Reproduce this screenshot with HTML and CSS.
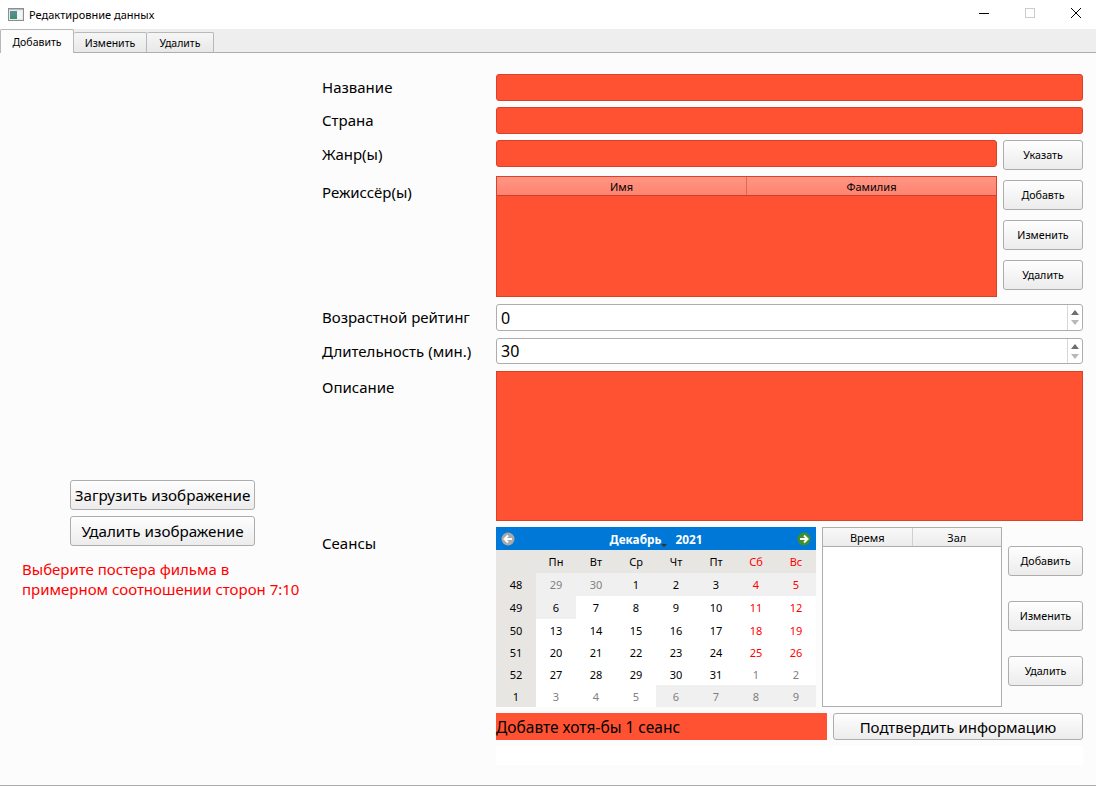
FILE: index.html
```html
<!DOCTYPE html>
<html>
	<head>
		<title>Редактировние данных</title>
		<meta charset="UTF-8">
		<link rel="stylesheet" href="styles.css">
	</head>
	<body>
		<div id="window">
			<div class="titlebar">
				<svg class="app-icon" width="16" height="13" viewBox="0 0 16 13">
					<defs>
						<linearGradient id="appfill" x1="0" y1="0" x2="0" y2="1">
							<stop offset="0" stop-color="#5d8f9a"/>
							<stop offset="1" stop-color="#3e8f6a"/>
						</linearGradient>
					</defs>
					<rect x="0.5" y="0.5" width="15" height="12" fill="#e8e8e8" stroke="#8a8f94"/>
					<rect x="2" y="3" width="7" height="8" fill="url(#appfill)"/>
					<rect x="9" y="3" width="5" height="8" fill="#f4f6f6"/>
					<rect x="1" y="1" width="14" height="1" fill="#b9bec2"/>
				</svg>
				<span class="title">Редактировние данных</span>
				<div class="win-buttons">
					<svg width="46" height="29" viewBox="0 0 46 29"><path d="M18 13.5h10" stroke="#000" fill="none"/></svg>
					<svg width="46" height="29" viewBox="0 0 46 29"><rect x="18.5" y="8.5" width="9" height="9" stroke="#ccc" fill="none"/></svg>
					<svg width="46" height="29" viewBox="0 0 46 29"><path d="M18 8l10 10M28 8L18 18" stroke="#000" fill="none"/></svg>
				</div>
			</div>
			<div class="tabs">
				<div class="tab active">Добавить</div>
				<div class="tab t2">Изменить</div>
				<div class="tab t3">Удалить</div>
			</div>
			<div id="pane">
				<div class="poster">
					<button class="btn big wide">Загрузить изображение</button>
					<button class="btn big wide">Удалить изображение</button>
					<p class="hint">Выберите постера фильма в<br>примерном соотношении сторон 7:10</p>
				</div>
				<div id="form">
					<div class="row r-name">
						<label>Название</label>
						<div class="field bad"></div>
					</div>
					<div class="row r-country">
						<label>Страна</label>
						<div class="field bad"></div>
					</div>
					<div class="row r-genre">
						<label>Жанр(ы)</label>
						<div class="field bad"></div>
						<button class="btn side">Указать</button>
					</div>
					<div class="row r-dir">
						<label>Режиссёр(ы)</label>
						<div class="table bad-table">
							<div class="thead"><span>Имя</span><span>Фамилия</span></div>
						</div>
						<div class="side-col">
							<button class="btn side">Добавть</button>
							<button class="btn side">Изменить</button>
							<button class="btn side">Удалить</button>
						</div>
					</div>
					<div class="row r-age">
						<label>Возрастной рейтинг</label>
						<div class="spin"><span class="val">0</span><div class="arrows"><i class="up"></i><i class="down"></i></div></div>
					</div>
					<div class="row r-len">
						<label>Длительность (мин.)</label>
						<div class="spin"><span class="val">30</span><div class="arrows"><i class="up"></i><i class="down"></i></div></div>
					</div>
					<div class="row r-desc">
						<label>Описание</label>
						<div class="desc"></div>
					</div>
					<div class="row r-sess">
						<label>Сеансы</label>
						<div class="calendar">
							<div class="cal-head">
								<svg width="14" height="14" viewBox="0 0 14 14"><circle cx="7" cy="7" r="6.5" fill="#a9a9a9"/><path d="M11 7H4M7 3.5L3.5 7 7 10.500" stroke="#fff" stroke-width="2" fill="none"/></svg>
								<span class="month">Декабрь<i class="drop"></i></span>
								<span class="year">2021</span>
								<svg width="14" height="14" viewBox="0 0 14 14"><circle cx="7" cy="7" r="6.500" fill="#3f8f2c"/><path d="M3 7h7M7 3.500L10.500 7 7 10.500" stroke="#fff" stroke-width="2" fill="none"/></svg>
							</div>
							<div class="cal-grid">
								<b class="wk"></b><b class="wk">Пн</b><b class="wk">Вт</b><b class="wk">Ср</b><b class="wk">Чт</b><b class="wk">Пт</b><b class="wk red">Сб</b><b class="wk red">Вс</b>
								<b class="wk">48</b><b class="gr out">29</b><b class="gr out">30</b><b class="gr">1</b><b class="gr">2</b><b class="gr">3</b><b class="gr red">4</b><b class="gr red">5</b>
								<b class="wk">49</b><b class="gr">6</b><b>7</b><b>8</b><b>9</b><b>10</b><b class="red">11</b><b class="red">12</b>
								<b class="wk">50</b><b>13</b><b>14</b><b>15</b><b>16</b><b>17</b><b class="red">18</b><b class="red">19</b>
								<b class="wk">51</b><b>20</b><b>21</b><b>22</b><b>23</b><b>24</b><b class="red">25</b><b class="red">26</b>
								<b class="wk">52</b><b>27</b><b>28</b><b>29</b><b>30</b><b>31</b><b class="out">1</b><b class="out">2</b>
								<b class="wk">1</b><b class="out">3</b><b class="out">4</b><b class="out">5</b><b class="gr out">6</b><b class="gr out">7</b><b class="gr out">8</b><b class="gr out">9</b>
							</div>
						</div>
						<div class="table sess-table">
							<div class="thead"><span>Время</span><span>Зал</span></div>
						</div>
						<div class="side-col sess-btns">
							<button class="btn side">Добавить</button>
							<button class="btn side">Изменить</button>
							<button class="btn side">Удалить</button>
						</div>
					</div>
					<div class="row r-submit">
						<div class="error">Добавте хотя-бы 1 сеанс</div>
						<button class="btn big confirm">Подтвердить информацию</button>
					</div>
					<div class="blank"></div>
				</div>
			</div>
		</div>
	</body>
</html>
```

FILE: styles.css
```css
html, body {
	box-sizing: border-box;
	margin: 0;
	padding: 0;
	background-color: #fcfcfc;
	font-family: 'Noto Sans', 'DejaVu Sans', sans-serif;
	color: #000;
}

#window {
	width: 1096px;
	height: 786px;
	overflow: hidden;
}

.titlebar {
	display: flex;
	align-items: center;
	height: 29px;
	background-color: #fff;
}

.app-icon {
	margin: 0 5px 1px 8px;
}

.title {
	font-size: 11px;
	margin-bottom: 1px;
}

.win-buttons {
	display: flex;
	margin-left: auto;
	margin-right: -3px;
}

.tabs {
	display: flex;
	align-items: flex-end;
	height: 23px;
	background-color: #eeeeee;
	border-bottom: 1px solid #adadad;
}

.tab {
	box-sizing: border-box;
	height: 21px;
	margin-bottom: -1px;
	border: 1px solid #b8b8b8;
	border-bottom-color: #adadad;
	border-left: 0;
	border-radius: 2px 2px 0 0;
	background: linear-gradient(#f6f6f6, #e8e8e8);
	font-size: 10.500px;
	line-height: 20px;
	text-align: center;
}

.tab.active {
	width: 74px;
	height: 24px;
	border-left: 1px solid #b8b8b8;
	border-bottom: 0;
	background: #fcfcfc;
	line-height: 25px;
}

.t2 {
	width: 73px;
}

.t3 {
	width: 67px;
}

#pane {
	display: flex;
	height: 732px;
	border-bottom: 1px solid #adadad;
}

.poster {
	display: flex;
	flex-direction: column;
	align-items: flex-start;
	width: 322px;
	padding: 427px 0 0 0;
}

.btn {
	box-sizing: border-box;
	padding: 0;
	border: 1px solid #adadad;
	border-radius: 3px;
	background: linear-gradient(#fefefe, #ececec);
	font-family: inherit;
	color: #000;
}

.big {
	font-size: 15px;
}

.wide {
	width: 185px;
	height: 30px;
	margin: 0 0 6px 70px;
	font-size: 15.200px;
}

.hint {
	margin: 7px 0 0 22px;
	font-size: 15px;
	line-height: 20px;
	white-space: nowrap;
	color: #ff0000;
}

#form {
	display: flex;
	flex-direction: column;
	width: 761px;
	padding-top: 21px;
}

.row {
	display: flex;
	align-items: flex-start;
}

.row label {
	flex: 0 0 174px;
	font-size: 15px;
	line-height: 27px;
}

.field {
	flex: 1;
	height: 27px;
}

.bad {
	box-sizing: border-box;
	border: 1px solid #d9422a;
	border-radius: 3px;
	background-color: #ff5233;
}

.r-name, .r-country {
	height: 33px;
}

.r-genre {
	height: 36px;
}

.r-genre label {
	margin-top: 1px;
}

.side {
	flex: none;
	width: 80px;
	height: 30px;
	font-size: 10.700px;
}

.r-genre .side {
	margin-left: 6px;
}

.r-dir {
	height: 128px;
}

.r-dir label {
	margin-top: 3px;
}

.table {
	box-sizing: border-box;
	border: 1px solid #adadad;
}

.thead {
	display: flex;
	box-sizing: border-box;
	height: 19px;
	border-bottom: 1px solid #adadad;
	background: linear-gradient(#f8f8f8, #ececec);
	font-size: 11px;
	line-height: 19px;
}

.thead span {
	flex: 1;
	text-align: center;
}

.thead span + span {
	border-left: 1px solid #d0d0d0;
}

.bad-table {
	width: 501px;
	height: 121px;
	border-color: #d9422a;
	background-color: #ff5233;
}

.bad-table .thead {
	border-bottom-color: #c9432c;
	background: linear-gradient(#ff9583, #ff8370);
}

.bad-table .thead span + span {
	border-left-color: #d96a58;
}

.side-col {
	display: flex;
	flex-direction: column;
	gap: 10px;
	margin: 4px 0 0 6px;
}

.r-age {
	height: 34px;
}

.r-len {
	height: 33px;
}

.spin {
	display: flex;
	flex: 1;
	box-sizing: border-box;
	align-items: center;
	justify-content: space-between;
	height: 27px;
	border: 1px solid #adadad;
	border-radius: 3px;
	background-color: #fff;
	font-size: 16px;
}

.r-len .spin {
	height: 26px;
}

.val {
	margin-left: 4px;
}

.arrows {
	display: flex;
	flex-direction: column;
	align-items: center;
	justify-content: center;
	gap: 5px;
	width: 14px;
	height: 100%;
	border-left: 1px solid #d8d8d8;
}

.arrows i {
	width: 0;
	height: 0;
	border-left: 4px solid transparent;
	border-right: 4px solid transparent;
}

.arrows .up {
	border-bottom: 5px solid #6e6e6e;
}

.arrows .down {
	border-top: 5px solid #b8b8b8;
}

.r-desc {
	height: 156px;
}

.r-desc label {
	margin-top: 3px;
}

.desc {
	flex: 1;
	box-sizing: border-box;
	height: 150px;
	border: 1px solid #d9422a;
	background-color: #ff5233;
}

.r-sess {
	height: 186px;
}

.r-sess label {
	margin-top: 3px;
}

.calendar {
	width: 320px;
	height: 180px;
	font-size: 11px;
}

.cal-head {
	display: flex;
	align-items: center;
	justify-content: center;
	height: 23px;
	padding: 0 5px;
	box-sizing: border-box;
	background-color: #0078d7;
	font-size: 11.800px;
	font-weight: bold;
	color: #fff;
}

.cal-head svg:first-child {
	margin-right: auto;
}

.cal-head svg:last-child {
	margin-left: auto;
}

.month {
	position: relative;
	margin-right: 14px;
}

.drop {
	position: absolute;
	right: -6px;
	bottom: 0;
	width: 0;
	height: 0;
	border-left: 3px solid transparent;
	border-right: 3px solid transparent;
	border-top: 3px solid #333;
}

.cal-grid {
	display: grid;
	grid-template-columns: repeat(8, 40px);
	grid-template-rows: 23px 23px 23px 22px 22px 22px 22px;
	background-color: #fff;
}

.cal-grid b {
	display: flex;
	align-items: center;
	justify-content: center;
	font-weight: normal;
}

.cal-grid .wk {
	background-color: #e8e6e3;
}

.cal-grid .gr {
	background-color: #f0f0f0;
}

.cal-grid .red {
	color: #ff0000;
}

.cal-grid .out {
	color: #808080;
}

.sess-table {
	width: 180px;
	height: 180px;
	margin-left: 6px;
	background-color: #fff;
}

.sess-btns {
	gap: 25px;
	margin: 19px 0 0 6px;
}

.sess-btns .side {
	width: 75px;
}

.r-submit {
	height: 33px;
	margin-left: 174px;
}

.error {
	box-sizing: border-box;
	width: 331px;
	height: 27px;
	background-color: #ff5233;
	font-size: 15.500px;
	line-height: 28px;
	white-space: nowrap;
}

.confirm {
	width: 250px;
	height: 27px;
	margin-left: 6px;
}

.blank {
	width: 587px;
	height: 19px;
	margin-left: 174px;
	background-color: #fff;
}
```
